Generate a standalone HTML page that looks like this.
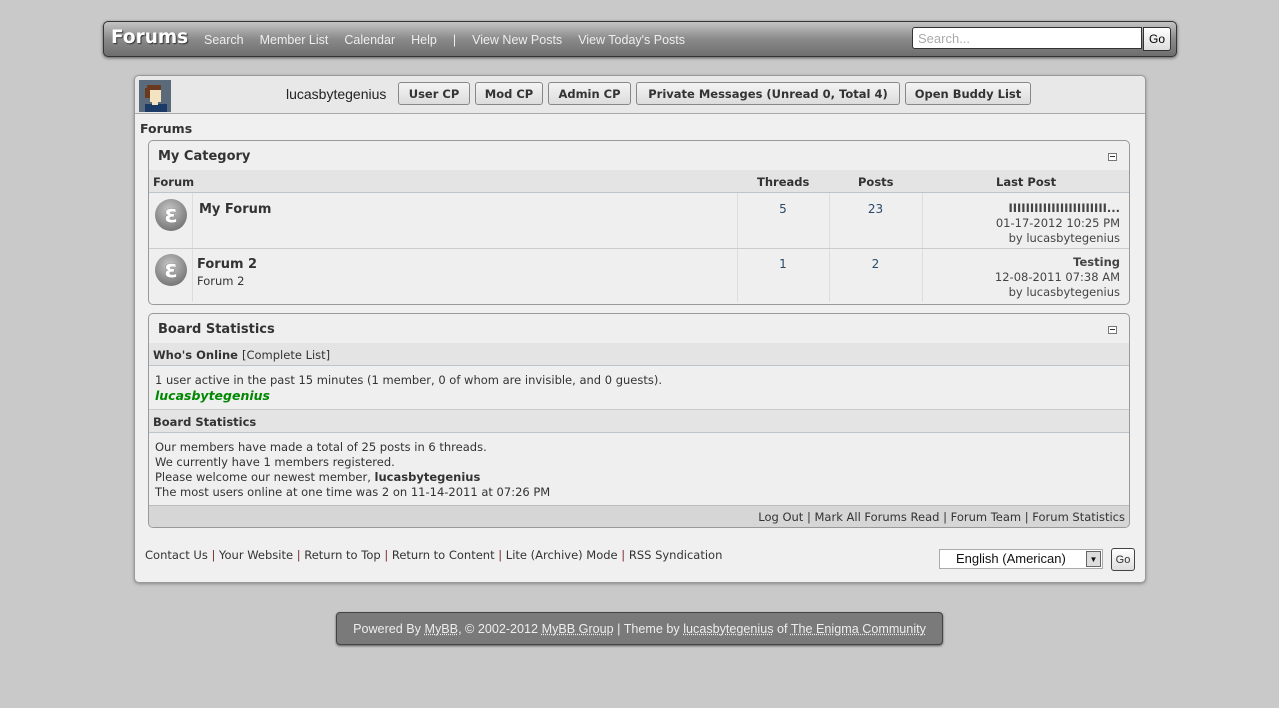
<!DOCTYPE html>
<html><head><style>
body{margin:0;width:1279px;height:708px;background:#c9c9c9;font-family:"DejaVu Sans",Verdana,sans-serif;font-size:12px;color:#333;position:relative;overflow:hidden}
.abs{position:absolute}
#hdr{left:103px;top:21px;width:1072px;height:34px;border:1px solid #333;border-radius:5px;background:linear-gradient(#c4c4c4,#8a8a8a 50%,#6e6e6e);box-shadow:0 1px 3px #555}
#hdr .logo{left:7px;top:5px;font-family:"DejaVu Sans",sans-serif;font-weight:bold;font-size:18.5px;color:#fff;text-shadow:1px 1px 1px #333}
#hdr .nav{left:100px;top:11px;font-family:"Liberation Sans",sans-serif;font-size:12.5px;color:#eee;word-spacing:0}
#hdr .nav span{margin-right:16px}
#srch{left:808px;top:5px;width:230px;height:22px;background:#fff;border:1px solid #333;border-radius:3px 0 0 3px;font-family:"Liberation Sans",sans-serif;font-size:13px;color:#aaa;line-height:22px;padding-left:5px;box-sizing:border-box}
#go1{left:1039px;top:5px;width:28px;height:24px;background:linear-gradient(#fff,#ddd);border:1px solid #333;border-radius:0 3px 3px 0;box-sizing:border-box;font-family:"Liberation Sans",sans-serif;font-size:12px;text-align:center;line-height:22px;color:#000}
#main{left:134px;top:75px;width:1010px;height:506px;background:#f0f0f0;border:1px solid #999;border-radius:5px;box-shadow:0 1px 3px #888}
#ubar{left:0;top:0;width:1010px;height:37px;background:#e8e8e8;border-bottom:1px solid #aaa;border-radius:5px 5px 0 0}
.btn{position:absolute;top:6px;height:23px;border:1px solid #888;border-radius:3px;background:linear-gradient(#f4f4f4,#dcdcdc);font-weight:bold;font-size:11.5px;line-height:23px;text-align:center;box-sizing:border-box;color:#333}
.box{position:absolute;left:13px;width:980px;border:1px solid #999;border-radius:5px;background:#efefef;overflow:hidden}
.box .t{height:29px;line-height:31px;padding-left:9px;font-weight:bold;font-size:13px;color:#333}
.minus{position:absolute;right:12px;top:12px;width:7px;height:6px;border:1px solid #777;background:#fff}
.minus:after{content:"";position:absolute;left:1px;top:2px;width:5px;height:1px;background:#333}
.thead{height:22px;background:#e4e4e4;border-bottom:1px solid #bcc4cc;font-weight:bold;font-size:11.5px;line-height:25px;position:relative}
.row{position:relative;border-bottom:1px solid #ccc}
.icon{position:absolute;left:6px;width:32px;height:32px;border-radius:50%;background:radial-gradient(circle at 45% 35%,#c8c8c8,#777 75%,#555);}
.icon:after{content:"\03B5";position:absolute;left:0;right:0;top:1px;text-align:center;color:#fff;font-weight:bold;font-size:24px;line-height:28px;text-shadow:0 0 1px #444}
.c{position:absolute;text-align:center;font-size:12px;color:#2a4a6a}
.vl{position:absolute;top:0;bottom:0;width:1px;background:#ddd}
.lp{position:absolute;right:9px;text-align:right;font-size:11.5px;line-height:15px;color:#444}
.sub{height:22px;background:#e4e4e4;border-bottom:1px solid #bcc4cc;border-top:1px solid #ccc;font-weight:bold;font-size:11.5px;line-height:24px;padding-left:4px}
.txt{padding:7px 6px 5px;font-size:11.5px;line-height:15px;color:#333}
.foot{font-size:11.5px;color:#333}
.sep{color:#7a2a2a}
</style></head><body>
<div id="hdr" class="abs">
<div class="abs logo">Forums</div>
<div class="abs nav"><span>Search</span><span>Member List</span><span>Calendar</span><span>Help</span><span>|</span><span>View New Posts</span><span>View Today's Posts</span></div>
<div id="srch" class="abs">Search...</div>
<div id="go1" class="abs">Go</div>
</div>
<div id="main" class="abs">
<div id="ubar" class="abs">
<svg class="abs" style="left:4px;top:4px" width="32" height="32" viewBox="0 0 32 32"><rect width="32" height="32" fill="#5a6a7a"/><rect x="8" y="5" width="14" height="6" fill="#6b3a1e"/><rect x="6" y="8" width="5" height="10" fill="#6b3a1e"/><rect x="11" y="10" width="11" height="12" fill="#f4e3c0"/><rect x="6" y="24" width="22" height="8" fill="#1c3a66"/><rect x="13" y="22" width="6" height="3" fill="#f4e3c0"/></svg>
<div class="abs" style="left:151px;top:10px;font-family:'Liberation Sans',sans-serif;font-size:14px;color:#222">lucasbytegenius</div>
<div class="btn" style="left:263px;width:72px">User CP</div>
<div class="btn" style="left:340px;width:68px">Mod CP</div>
<div class="btn" style="left:413px;width:83px">Admin CP</div>
<div class="btn" style="left:501px;width:264px">Private Messages (Unread 0, Total 4)</div>
<div class="btn" style="left:770px;width:126px">Open Buddy List</div>
</div>
<div class="abs" style="left:5px;top:45px;font-weight:bold;font-size:12.5px">Forums</div>
<div class="box" style="top:64px;height:163px">
<div class="t">My Category</div><div class="minus"></div>
<div class="thead"><span style="position:absolute;left:4px">Forum</span><span style="position:absolute;left:608px">Threads</span><span style="position:absolute;left:709px">Posts</span><span style="position:absolute;left:847px">Last Post</span></div>
<div class="row" style="height:55px">
<div class="vl" style="left:43px"></div><div class="vl" style="left:588px"></div><div class="vl" style="left:680px"></div><div class="vl" style="left:773px"></div>
<div class="icon" style="top:6px"></div>
<div class="abs" style="left:50px;top:9px;font-weight:bold;font-size:13px">My Forum</div>
<div class="c" style="left:588px;width:92px;top:9px">5</div><div class="c" style="left:680px;width:93px;top:9px">23</div>
<div class="lp" style="top:8px"><b>IIIIIIIIIIIIIIIIIIIIIII...</b><br>01-17-2012 10:25 PM<br>by lucasbytegenius</div>
</div>
<div class="row" style="height:53px;border-bottom:none">
<div class="vl" style="left:43px"></div><div class="vl" style="left:588px"></div><div class="vl" style="left:680px"></div><div class="vl" style="left:773px"></div>
<div class="icon" style="top:5px"></div>
<div class="abs" style="left:48px;top:8px;font-weight:bold;font-size:13px">Forum 2</div>
<div class="abs" style="left:48px;top:25px;font-size:11.5px">Forum 2</div>
<div class="c" style="left:588px;width:92px;top:8px">1</div><div class="c" style="left:680px;width:93px;top:8px">2</div>
<div class="lp" style="top:6px"><b>Testing</b><br>12-08-2011 07:38 AM<br>by lucasbytegenius</div>
</div>
</div>
<div class="box" style="top:237px;height:213px">
<div class="t">Board Statistics</div><div class="minus"></div>
<div class="sub" style="border-top:none"><b>Who's Online</b> <span style="font-weight:normal">[Complete List]</span></div>
<div class="txt">1 user active in the past 15 minutes (1 member, 0 of whom are invisible, and 0 guests).<br><i style="color:#080;font-weight:bold;font-size:12.5px">lucasbytegenius</i></div>
<div class="sub">Board Statistics</div>
<div class="txt">Our members have made a total of 25 posts in 6 threads.<br>We currently have 1 members registered.<br>Please welcome our newest member, <b>lucasbytegenius</b><br>The most users online at one time was 2 on 11-14-2011 at 07:26 PM</div>
<div class="abs" style="left:0;right:0;bottom:0;height:22px;background:#d6d6d6;border-top:1px solid #bbb;text-align:right;line-height:22px;padding-right:4px;font-size:11.5px;box-sizing:border-box">Log Out | Mark All Forums Read | Forum Team | Forum Statistics</div>
</div>
<div class="abs foot" style="left:10px;top:472px">Contact Us <span class="sep">|</span> Your Website <span class="sep">|</span> Return to Top <span class="sep">|</span> Return to Content <span class="sep">|</span> Lite (Archive) Mode <span class="sep">|</span> RSS Syndication</div>
<div class="abs" style="left:804px;top:473px;width:164px;height:20px;background:#fff;border:1px solid #aaa;box-sizing:border-box;font-family:'Liberation Sans',sans-serif;font-size:13px;line-height:18px;padding-left:16px;color:#111">English (American)<span style="position:absolute;right:1px;top:1px;width:15px;height:16px;border:1px solid #666;background:#ddd;font-size:8px;line-height:16px;text-align:center;box-sizing:border-box">▼</span></div>
<div class="abs" style="left:976px;top:472px;width:24px;height:23px;border:1px solid #444;border-radius:3px;background:linear-gradient(#fff,#ddd);font-family:'Liberation Sans',sans-serif;font-size:11px;line-height:23px;text-align:center;box-sizing:border-box">Go</div>
</div>
<div class="abs" style="left:336px;top:612px;width:607px;height:33px;background:#7a7a7a;border:1px solid #444;border-radius:4px;box-sizing:border-box;color:#eee;font-family:'Liberation Sans',sans-serif;font-size:12.6px;line-height:33px;text-align:center;box-shadow:0 1px 2px #555">Powered By <u style="text-decoration-style:dotted">MyBB</u>, © 2002-2012 <u style="text-decoration-style:dotted">MyBB Group</u> | Theme by <u style="text-decoration-style:dotted">lucasbytegenius</u> of <u style="text-decoration-style:dotted">The Enigma Community</u></div>
</body></html>
